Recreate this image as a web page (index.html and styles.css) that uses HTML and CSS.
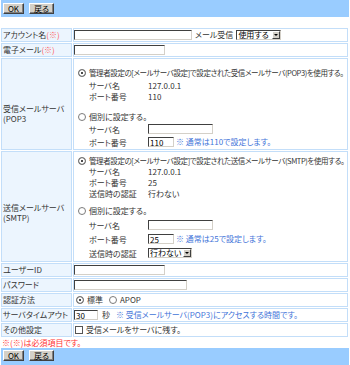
FILE: index.html
```html
<!DOCTYPE html>
<html lang="ja">
<head>
  <meta charset="utf-8">
  <title>アカウント設定</title>
  <link rel="stylesheet" href="styles.css">
</head>
<body>

  <!-- Top buttons -->
  <div class="bar bar-top">
    <button class="btn btn-ok">OK</button>
    <button class="btn btn-back">戻る</button>
  </div>

  <table class="form">
    <tr>
      <th>アカウント名<span class="req">(※)</span></th>
      <td>
        <div class="line">
          <input class="txt w-account" type="text">
          <span class="after">メール受信</span>
          <span class="select w-use"><select><option>使用する</option></select><span class="arrow"></span></span>
        </div>
      </td>
    </tr>
    <tr>
      <th>電子メール<span class="req">(※)</span></th>
      <td><div class="line"><input class="txt w-mail" type="text"></div></td>
    </tr>

    <!-- POP3 -->
    <tr>
      <th class="label-pop">受信メールサーバ<br>(POP3</th>
      <td class="server server-pop">
        <div class="opt"><input type="radio" name="pop" checked><span class="opt-text">管理者設定の[メールサーバ設定]で設定された受信メールサーバ(POP3)を使用する。</span></div>
        <div class="info">
          <span>サーバ名</span><span>127.0.0.1</span>
          <span>ポート番号</span><span>110</span>
        </div>
        <div class="opt opt-custom"><input type="radio" name="pop"><span>個別に設定する。</span></div>
        <div class="fields">
          <span>サーバ名</span><span class="line"><input class="txt w-host" type="text"></span>
          <span>ポート番号</span><span class="line"><input class="txt w-port" type="text" value="110"><span class="note">※ 通常は110で設定します。</span></span>
        </div>
      </td>
    </tr>

    <!-- SMTP -->
    <tr>
      <th class="label-smtp">送信メールサーバ<br>(SMTP)</th>
      <td class="server server-smtp">
        <div class="opt"><input type="radio" name="smtp" checked><span class="opt-text">管理者設定の[メールサーバ設定]で設定された送信メールサーバ(SMTP)を使用する。</span></div>
        <div class="info">
          <span>サーバ名</span><span>127.0.0.1</span>
          <span>ポート番号</span><span>25</span>
          <span>送信時の認証</span><span>行わない</span>
        </div>
        <div class="opt opt-custom"><input type="radio" name="smtp"><span>個別に設定する。</span></div>
        <div class="fields">
          <span>サーバ名</span><span class="line"><input class="txt w-host" type="text"></span>
          <span>ポート番号</span><span class="line"><input class="txt w-port" type="text" value="25"><span class="note">※ 通常は25で設定します。</span></span>
          <span>送信時の認証</span><span class="line"><span class="select w-auth"><select><option>行わない</option></select><span class="arrow"></span></span></span>
        </div>
      </td>
    </tr>

    <tr>
      <th>ユーザーID</th>
      <td><div class="line"><input class="txt w-mail" type="text"></div></td>
    </tr>
    <tr>
      <th>パスワード</th>
      <td><div class="line"><input class="txt w-pass" type="password"></div></td>
    </tr>
    <tr>
      <th>認証方法</th>
      <td>
        <div class="line method">
          <input type="radio" name="auth" checked><span>標準</span>
          <input type="radio" name="auth"><span>APOP</span>
        </div>
      </td>
    </tr>
    <tr>
      <th>サーバタイムアウト</th>
      <td>
        <div class="line">
          <input class="txt w-time" type="text" value="30">
          <span class="sec">秒</span>
          <span class="note">※ 受信メールサーバ(POP3)にアクセスする時間です。</span>
        </div>
      </td>
    </tr>
    <tr>
      <th>その他設定</th>
      <td><div class="line keep"><input type="checkbox"><span>受信メールをサーバに残す。</span></div></td>
    </tr>
  </table>

  <p class="required">※(※)は必須項目です。</p>

  <!-- Bottom buttons -->
  <div class="bar bar-bottom">
    <button class="btn btn-ok">OK</button>
    <button class="btn btn-back">戻る</button>
  </div>

</body>
</html>
```

FILE: styles.css
```css
body {
  margin: 0;
  font-family: "Noto Sans CJK JP", "Liberation Sans", sans-serif;
  font-size: 8px;
  line-height: 10px;
  font-feature-settings: "palt";
  color: #333;
  background: #fff;
}

/* button bars */
.bar {
  display: flex;
  align-items: flex-start;
  gap: 5px;
  margin: 0 1px;
  padding: 3px 0 0 2px;
  box-sizing: border-box;
  background: #99ccff;
}

.bar-top {
  height: 17px;
}

.bar-bottom {
  height: 18px;
  padding-top: 2px;
}

.btn {
  height: 11px;
  padding: 0;
  font: inherit;
  font-size: 8px;
  line-height: 9px;
  color: #000;
  background: #d4d0c8;
  border: 1px solid;
  border-color: #fff #404040 #404040 #fff;
  box-shadow: inset -1px -1px #808080;
}

.btn-ok {
  width: 21px;
}

.btn-back {
  width: 25px;
}

/* form table */
.form {
  width: 349px;
  margin-top: 10px;
  border-collapse: separate;
  border-spacing: 1px;
  table-layout: fixed;
}

.form th,
.form td {
  height: 12px;
  padding: 0;
  border: 1px solid #c3def9;
  vertical-align: middle;
}

.form th {
  width: 67px;
  padding: 0 1px;
  font-weight: normal;
  text-align: left;
  background: #ecf5fe;
}

.req {
  color: #ff5c5c;
}

.line {
  display: flex;
  align-items: center;
  height: 12px;
  white-space: nowrap;
}

.txt {
  height: 10px;
  margin: 0;
  padding: 0 1px;
  box-sizing: border-box;
  font: inherit;
  line-height: 8px;
  color: #000;
  background: #fff;
  border: 1px solid;
  border-color: #404040 #d4d0c8 #d4d0c8 #404040;
}

.w-account { width: 118px; }
.w-mail { width: 91px; }
.w-pass { width: 113px; }
.w-host { width: 65px; }
.w-port { width: 26px; }
.w-time { width: 24px; }

.after {
  margin: 0 3px 0 3px;
}

.select {
  display: inline-flex;
  align-items: center;
  height: 10px;
  box-sizing: border-box;
  background: #fff;
  border: 1px solid;
  border-color: #404040 #d4d0c8 #d4d0c8 #404040;
}

.select select {
  flex: 1;
  min-width: 0;
  height: 8px;
  padding: 0 0 0 1px;
  font: inherit;
  line-height: 8px;
  color: #000;
  background: transparent;
  border: 0;
  appearance: none;
  -webkit-appearance: none;
}

.w-use { width: 45px; }
.w-auth { width: 44px; }

.arrow {
  display: flex;
  align-items: center;
  justify-content: center;
  flex: none;
  width: 8px;
  height: 8px;
  box-sizing: border-box;
  background: #d4d0c8;
  border: 1px solid;
  border-color: #fff #404040 #404040 #fff;
}

.arrow::after {
  content: "";
  border-left: 2px solid transparent;
  border-right: 2px solid transparent;
  border-top: 2px solid #000;
}

input[type="radio"] {
  appearance: none;
  -webkit-appearance: none;
  width: 8px;
  height: 8px;
  margin: 0 3px 0 0;
  flex: none;
  box-sizing: border-box;
  border: 1px solid #7b7b7b;
  border-radius: 50%;
  background: #fff;
}

input[type="radio"]:checked {
  background: #111;
  box-shadow: inset 0 0 0 2px #fff;
}

input[type="checkbox"] {
  appearance: none;
  -webkit-appearance: none;
  width: 8px;
  height: 8px;
  margin: 0 3px 0 1px;
  flex: none;
  box-sizing: border-box;
  border: 1px solid #555;
  background: #fff;
}

/* mail server blocks */
.form .server {
  padding-left: 3px;
}

.form .server-pop {
  padding-top: 8px;
}

.form .server-smtp {
  padding-top: 3px;
}

.opt {
  display: flex;
  align-items: center;
  height: 11px;
  padding-left: 1px;
  white-space: nowrap;
}

.opt-text {
  font-size: 7.5px;
  letter-spacing: -0.4px;
}

.server-pop .info {
  margin-top: 2px;
}

.server-pop .opt-custom {
  margin-top: 9px;
}

.server-smtp .opt-custom {
  margin-top: 6px;
}

.info,
.fields {
  display: grid;
  grid-template-columns: 59px auto;
  padding-left: 12px;
}

.info span {
  line-height: 11px;
}

.fields {
  grid-auto-rows: 13px;
  margin-top: 1px;
}

.server-smtp .fields {
  grid-auto-rows: 14px;
  margin-top: 3px;
}

.fields > span {
  display: flex;
  align-items: center;
  white-space: nowrap;
}

.form .label-pop {
  padding-top: 20px;
}

.form .label-smtp {
  padding-top: 12px;
}

.note {
  margin-left: 2px;
  color: #3f74d9;
}

.method input[type="radio"] {
  margin-left: 2px;
  margin-right: 3px;
}

.method span {
  margin-right: 4px;
}

.sec {
  margin: 0 4px 0 4px;
}

.required {
  margin: 0 2px;
  height: 10px;
  color: #ff3333;
}
```
